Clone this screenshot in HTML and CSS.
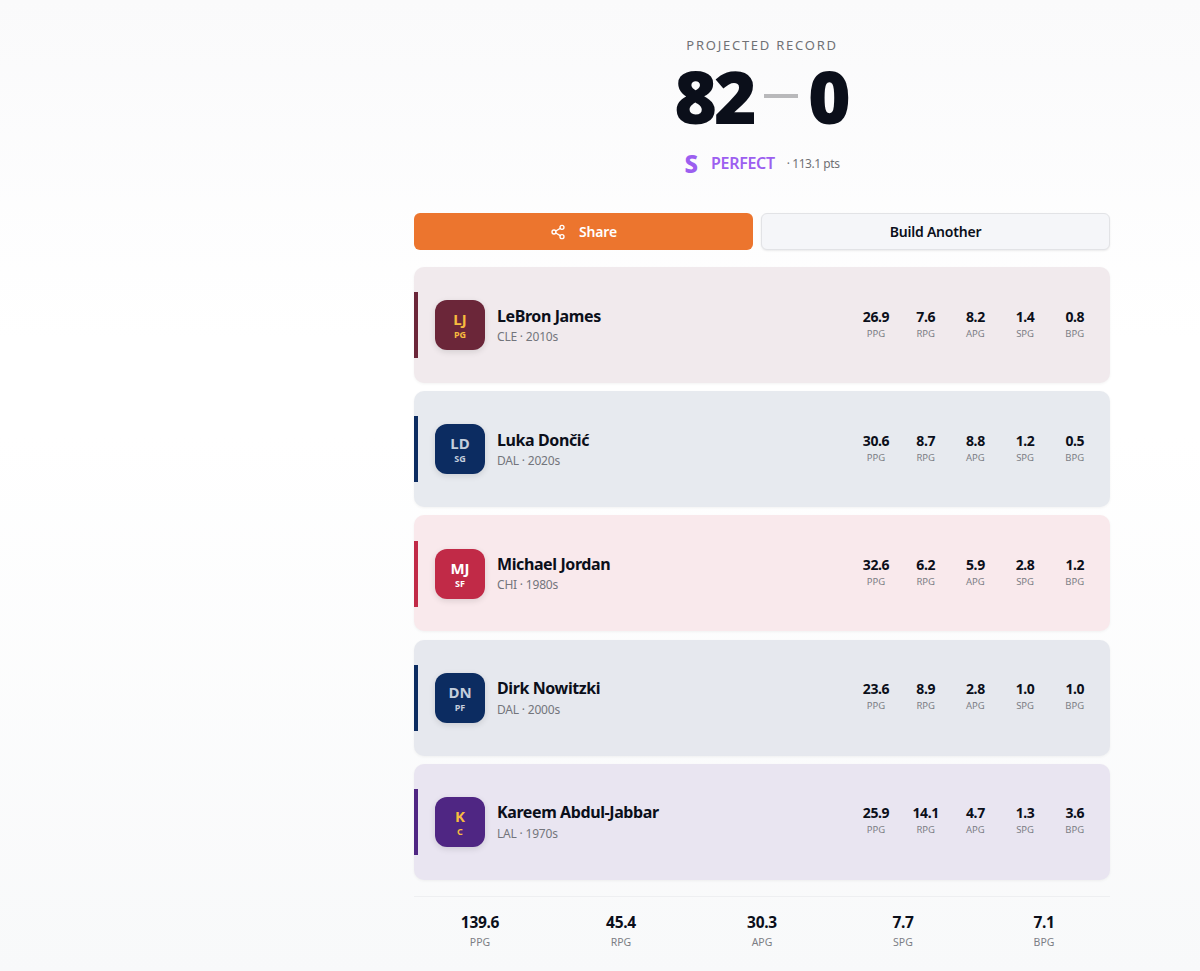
FILE: index.html
```html
<!DOCTYPE html>
<html lang="en">
<head>
    <meta charset="UTF-8">
    <meta name="viewport" content="width=device-width, initial-scale=1.0">
    <title>Projected Record</title>
    <link rel="stylesheet" href="styles.css">
</head>
<body>
<main class="results">
    <header class="hero">
        <div class="hero-label">PROJECTED RECORD</div>
        <div class="record">
            <span>82</span>
            <i class="record-dash"></i>
            <span>0</span>
        </div>
        <div class="grade">
            <span class="grade-letter">S</span>
            <span class="grade-name">PERFECT</span>
            <span class="grade-pts">· 113.1 pts</span>
        </div>
    </header>

    <div class="actions">
        <button class="btn btn-share">
            <svg width="16" height="16" viewBox="0 0 24 24" fill="none" stroke="currentColor" stroke-width="2" stroke-linecap="round" stroke-linejoin="round">
                <circle cx="18" cy="5" r="3"></circle>
                <circle cx="6" cy="12" r="3"></circle>
                <circle cx="18" cy="19" r="3"></circle>
                <path d="M8.59 13.51l6.83 3.98M15.41 6.51l-6.82 3.98"></path>
            </svg>
            Share
        </button>
        <button class="btn btn-again">Build Another</button>
    </div>

    <section class="roster">
        <article class="card card-cle">
            <div class="avatar"><b>LJ</b><small>PG</small></div>
            <div class="who"><h3>LeBron James</h3><p>CLE · 2010s</p></div>
            <div class="stats">
                <div class="stat"><b>26.9</b><small>PPG</small></div>
                <div class="stat"><b>7.6</b><small>RPG</small></div>
                <div class="stat"><b>8.2</b><small>APG</small></div>
                <div class="stat"><b>1.4</b><small>SPG</small></div>
                <div class="stat"><b>0.8</b><small>BPG</small></div>
            </div>
        </article>
        <article class="card card-dal">
            <div class="avatar"><b>LD</b><small>SG</small></div>
            <div class="who"><h3>Luka Dončić</h3><p>DAL · 2020s</p></div>
            <div class="stats">
                <div class="stat"><b>30.6</b><small>PPG</small></div>
                <div class="stat"><b>8.7</b><small>RPG</small></div>
                <div class="stat"><b>8.8</b><small>APG</small></div>
                <div class="stat"><b>1.2</b><small>SPG</small></div>
                <div class="stat"><b>0.5</b><small>BPG</small></div>
            </div>
        </article>
        <article class="card card-chi">
            <div class="avatar"><b>MJ</b><small>SF</small></div>
            <div class="who"><h3>Michael Jordan</h3><p>CHI · 1980s</p></div>
            <div class="stats">
                <div class="stat"><b>32.6</b><small>PPG</small></div>
                <div class="stat"><b>6.2</b><small>RPG</small></div>
                <div class="stat"><b>5.9</b><small>APG</small></div>
                <div class="stat"><b>2.8</b><small>SPG</small></div>
                <div class="stat"><b>1.2</b><small>BPG</small></div>
            </div>
        </article>
        <article class="card card-dal2">
            <div class="avatar"><b>DN</b><small>PF</small></div>
            <div class="who"><h3>Dirk Nowitzki</h3><p>DAL · 2000s</p></div>
            <div class="stats">
                <div class="stat"><b>23.6</b><small>PPG</small></div>
                <div class="stat"><b>8.9</b><small>RPG</small></div>
                <div class="stat"><b>2.8</b><small>APG</small></div>
                <div class="stat"><b>1.0</b><small>SPG</small></div>
                <div class="stat"><b>1.0</b><small>BPG</small></div>
            </div>
        </article>
        <article class="card card-lal">
            <div class="avatar"><b>K</b><small>C</small></div>
            <div class="who"><h3>Kareem Abdul-Jabbar</h3><p>LAL · 1970s</p></div>
            <div class="stats">
                <div class="stat"><b>25.9</b><small>PPG</small></div>
                <div class="stat"><b>14.1</b><small>RPG</small></div>
                <div class="stat"><b>4.7</b><small>APG</small></div>
                <div class="stat"><b>1.3</b><small>SPG</small></div>
                <div class="stat"><b>3.6</b><small>BPG</small></div>
            </div>
        </article>
    </section>

    <footer class="totals">
        <div class="total"><b>139.6</b><small>PPG</small></div>
        <div class="total"><b>45.4</b><small>RPG</small></div>
        <div class="total"><b>30.3</b><small>APG</small></div>
        <div class="total"><b>7.7</b><small>SPG</small></div>
        <div class="total"><b>7.1</b><small>BPG</small></div>
    </footer>
</main>
</body>
</html>
```

FILE: styles.css
```css
* {
    box-sizing: border-box;
}

html, body {
    margin: 0;
    height: 971px;
    overflow: hidden;
}

body {
    font-family: "Noto Sans", Arial, sans-serif;
    color: #0b0f1a;
    background: linear-gradient(180deg, #fafafb 0, #fff 35%, #fff 45%, #f8f9fa 100%);
}

.results {
    width: 696px;
    margin-left: 414px;
}

.hero {
    padding-top: 36px;
    text-align: center;
    height: 213px;
}

.hero-label {
    font-size: 13px;
    line-height: 18px;
    letter-spacing: 1.75px;
    color: #707175;
}

.record {
    display: flex;
    justify-content: center;
    align-items: center;
    gap: 10px;
    height: 72px;
    margin-top: 6px;
    margin-bottom: 18px;
    padding-right: 2px;
    font-size: 73px;
    line-height: 72px;
    font-weight: 900;
    letter-spacing: -3px;
}

.record-dash {
    width: 34px;
    height: 4px;
    background: #b9b9bb;
}

.grade {
    display: flex;
    justify-content: center;
    align-items: center;
    height: 26px;
}

.grade-letter {
    font-size: 24px;
    font-weight: 800;
    color: #9c5ff0;
    margin-right: 13px;
}

.grade-name {
    font-size: 16px;
    font-weight: 600;
    color: #9c5ff0;
    margin-right: 12px;
    letter-spacing: -0.3px;
}

.grade-pts {
    font-size: 12px;
    color: #707175;
    letter-spacing: -0.45px;
}

.actions {
    display: flex;
    gap: 8px;
    height: 37px;
    margin-bottom: 17px;
}

.btn {
    display: flex;
    align-items: center;
    justify-content: center;
    gap: 13px;
    font-family: inherit;
    font-size: 14px;
    font-weight: 600;
    border-radius: 6px;
    cursor: pointer;
    letter-spacing: -0.2px;
}

.btn-share {
    width: 339px;
    color: #fff;
    background: #ec752e;
    border: none;
}

.btn-again {
    width: 349px;
    color: #0b0f1a;
    background: #f5f6f9;
    border: 1px solid #e2e3e6;
    box-shadow: 0 1px 2px rgba(0, 0, 0, 0.08);
}

.roster {
    display: flex;
    flex-direction: column;
    gap: 8.2px;
}

.card {
    position: relative;
    display: flex;
    align-items: center;
    height: 116px;
    padding: 0 10.4px 0 21px;
    border-radius: 10px;
    box-shadow: 0 1px 3px rgba(0, 0, 0, 0.05);
}

.card::before {
    content: "";
    position: absolute;
    left: 0;
    top: 25.2px;
    width: 4px;
    height: 66px;
    background: var(--team);
}

.card-cle {
    --team: #6b2639;
    --ink: #f7bb3f;
    background: #f1eaed;
}

.card-dal {
    --team: #0c2c61;
    --ink: #c4cedc;
    background: #e7eaef;
}

.card-chi {
    --team: #c12a47;
    --ink: #fff;
    background: #f9e9ec;
}

.card-dal2 {
    --team: #0c2c61;
    --ink: #c4cedc;
    background: #e6e8ee;
}

.card-lal {
    --team: #4f2683;
    --ink: #f7bb3f;
    background: #e9e5f1;
}

.avatar {
    display: flex;
    flex-direction: column;
    align-items: center;
    justify-content: center;
    width: 50px;
    height: 50px;
    margin-top: 0.4px;
    border-radius: 12px;
    color: var(--ink);
    background: var(--team);
    box-shadow: 0 2px 6px rgba(0, 0, 0, 0.12);
}

.avatar b {
    font-size: 15px;
    line-height: 17px;
    font-weight: 700;
}

.avatar small {
    font-size: 9px;
    line-height: 9px;
    margin-top: 2px;
    font-weight: 700;
}

.who {
    flex: 1;
    margin-left: 12px;
    margin-top: 0.6px;
}

.who h3 {
    margin: 0 0 1.6px;
    font-size: 16px;
    line-height: 22px;
    font-weight: 700;
    letter-spacing: -0.4px;
}

.who p {
    margin: 0;
    font-size: 12px;
    line-height: 18px;
    letter-spacing: -0.2px;
    color: #73757c;
}

.stats {
    display: flex;
    margin-top: -3px;
}

.stat {
    display: flex;
    flex-direction: column;
    align-items: center;
    width: 49.7px;
}

.stat b {
    font-size: 14px;
    line-height: 17px;
    font-weight: 700;
    letter-spacing: -0.4px;
    margin-bottom: 2px;
}

.stat small {
    font-size: 9.5px;
    line-height: 13px;
    color: #7c7e85;
}

.totals {
    display: grid;
    grid-template-columns: repeat(5, 141px);
    justify-content: center;
    margin-top: 16px;
    padding-top: 14px;
    border-top: 1px solid #eeeff1;
}

.total {
    display: flex;
    flex-direction: column;
    align-items: center;
}

.total b {
    font-size: 15.5px;
    line-height: 22px;
    font-weight: 700;
    letter-spacing: -0.3px;
}

.total small {
    font-size: 10.5px;
    line-height: 18px;
    color: #7c7e85;
}
```
